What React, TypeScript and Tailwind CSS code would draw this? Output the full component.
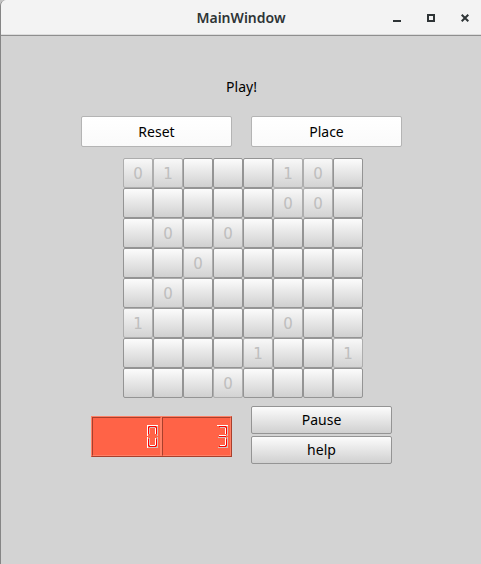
import React from "react";

const board: string[][] = [
  ["0", "1", "", "", "", "1", "0", ""],
  ["", "", "", "", "", "0", "0", ""],
  ["", "0", "", "0", "", "", "", ""],
  ["", "", "0", "", "", "", "", ""],
  ["", "0", "", "", "", "", "", ""],
  ["1", "", "", "", "", "0", "", ""],
  ["", "", "", "", "1", "", "", "1"],
  ["", "", "", "0", "", "", "", ""],
];

// Seven-segment strokes: light edge, red core, pale shadow edge.
type Stroke = { light: string; core: string; shade: string };
const segments: Record<string, Stroke> = {
  top: { light: "M0 0.5H11", core: "M2 1.5H9", shade: "M3 2.5H8" },
  upperLeft: { light: "M0.5 1V11", core: "M1.5 2V9", shade: "M2.5 3V9" },
  lowerLeft: { light: "M0.5 12V23", core: "M1.5 14V21", shade: "M2.5 13V20" },
  upperRight: { light: "M8.5 3V9", core: "M9.5 2V9", shade: "M10.5 1V11" },
  lowerRight: { light: "M8.5 13V20", core: "M9.5 14V21", shade: "M10.5 12V23" },
  middle: { light: "M2 10.5H9", core: "M2 11.5H9", shade: "M1 12.5H9" },
  bottom: { light: "M3 20.5H8", core: "M2 21.5H9", shade: "M1 22.5H10" },
};

const digits: Record<string, string[]> = {
  "0": ["top", "upperLeft", "lowerLeft", "upperRight", "lowerRight", "bottom"],
  "3": ["top", "upperRight", "middle", "lowerRight", "bottom"],
};

function Lcd({ value, label }: { value: string; label: string }) {
  return (
    <output
      aria-label={label}
      className="flex flex-1 items-center justify-end border border-t-[#a93f2c] border-l-[#a93f2c] border-r-[#ff8066] border-b-[#ff8066] bg-[#ff6347] pr-0.5"
    >
      <svg width="11" height="23" viewBox="0 0 11 23" fill="none" shapeRendering="crispEdges" aria-hidden="true">
        {digits[value].map((name) => (
          <g key={name}>
            <path d={segments[name].shade} stroke="#d2c0bc" />
            <path d={segments[name].light} stroke="#ffffff" />
            <path d={segments[name].core} stroke="#ff0000" />
          </g>
        ))}
      </svg>
    </output>
  );
}

function WideButton({ children }: { children: React.ReactNode }) {
  return (
    <button className="h-[31px] flex-1 rounded-xs border border-[#b4b4b4] bg-linear-to-b from-white to-[#fafafa] text-sm">
      {children}
    </button>
  );
}

function SmallButton({ children }: { children: React.ReactNode }) {
  return (
    <button className="h-7 rounded-xs border border-[#949494] bg-linear-to-b from-[#fcfcfc] to-[#d0d0d0] text-sm">
      {children}
    </button>
  );
}

export default function App() {
  return (
    <div className="bg-[#c4c4c4]">
      <div className="flex min-h-screen flex-col overflow-hidden rounded-tl-md border-l border-[#858585] bg-[#d3d3d3] font-['Noto_Sans','Open_Sans',sans-serif] text-sm text-black">
        <header className="grid h-9 grid-cols-[1fr_auto_1fr] items-center border-b border-[#8e8e8e] bg-[#f3f3f3] text-[#2e3436] shadow-[inset_0_-1px_0_#dcdcdc]">
          <h1 className="col-start-2 text-sm font-semibold">MainWindow</h1>
          <div className="flex justify-end gap-2.5 pr-1">
            <button aria-label="Minimize" className="flex size-6 items-center justify-center">
              <svg width="8" height="8" viewBox="0 0 8 8" aria-hidden="true">
                <path d="M0 6h8v2H0z" fill="currentColor" />
              </svg>
            </button>
            <button aria-label="Maximize" className="flex size-6 items-center justify-center">
              <svg width="8" height="8" viewBox="0 0 8 8" fill="none" aria-hidden="true">
                <path d="M1 1h6v6H1z" stroke="currentColor" strokeWidth="2" />
              </svg>
            </button>
            <button aria-label="Close" className="flex size-6 items-center justify-center">
              <svg width="8" height="8" viewBox="0 0 8 8" aria-hidden="true">
                <path d="M0.7 0.7 7.3 7.3M7.3 0.7 0.7 7.3" stroke="currentColor" strokeWidth="2" />
              </svg>
            </button>
          </div>
        </header>
        <main className="pt-[41px] pr-[79px] pl-20">
          <p className="text-center leading-5">Play!</p>
          <div className="mt-[19px] flex gap-[19px]">
            <WideButton>Reset</WideButton>
            <WideButton>Place</WideButton>
          </div>
          <div className="mt-[11px] flex justify-center pl-[3px]">
            <div className="grid grid-cols-[repeat(8,30px)]">
              {board.flatMap((row, r) =>
                row.map((cell, c) => (
                  <button
                    key={`${r}-${c}`}
                    aria-label={`Row ${r + 1}, column ${c + 1}`}
                    disabled={cell !== ""}
                    className="h-[30px] rounded-xs border border-[#949494] bg-linear-to-b from-[#fcfcfc] to-[#d0d0d0] pt-0.5 font-['DejaVu_Sans',sans-serif] text-[15px] leading-5 disabled:border-[#adadad] disabled:from-[#f8f8f8] disabled:to-[#d3d3d3] disabled:text-[#bebebe]"
                  >
                    {cell}
                  </button>
                )),
              )}
            </div>
          </div>
          <div className="mt-2 grid grid-cols-2 items-start gap-[19px] px-2.5">
            <div className="mt-2.5 flex h-[41px] gap-px border border-t-[#ff8066] border-l-[#ff8066] border-r-[#a93f2c] border-b-[#a93f2c] bg-[#ff8066]">
              <Lcd value="0" label="Hits" />
              <Lcd value="3" label="Count" />
            </div>
            <div className="flex flex-col gap-0.5">
              <SmallButton>Pause</SmallButton>
              <SmallButton>help</SmallButton>
            </div>
          </div>
        </main>
      </div>
    </div>
  );
}
